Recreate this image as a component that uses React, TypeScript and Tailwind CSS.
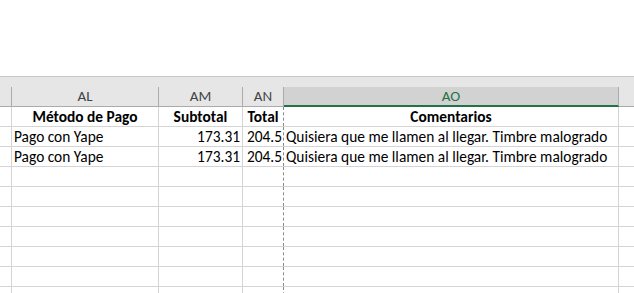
import React from "react";

const font = { fontFamily: "Carlito, Lato, 'Liberation Sans', sans-serif" };

function Row({ a, b, c, d, bold }: { a?: string; b?: string; c?: string; d?: string; bold?: boolean }) {
  const w = bold ? "font-bold" : "";
  return (
    <div className="flex h-[20px] border-b border-[#d4d4d4] text-[15.4px] leading-[19px] text-black">
      <div className="w-[12px] shrink-0 border-r border-[#d4d4d4]" />
      <div className={`w-[147px] shrink-0 border-r border-[#d4d4d4] px-[2px] whitespace-nowrap ${bold ? "text-center" : "text-left"} ${w}`}>{a}</div>
      <div className={`w-[84px] shrink-0 border-r border-[#d4d4d4] px-[2px] whitespace-nowrap ${bold ? "text-center" : "text-right"} ${w}`}>{b}</div>
      <div className={`w-[41px] shrink-0 border-r border-dashed border-r-[#8a8a8a] px-[1px] whitespace-nowrap ${bold ? "text-center" : "text-right"} ${w}`}>{c}</div>
      <div className={`w-[335px] shrink-0 border-r border-[#d4d4d4] px-[2px] whitespace-nowrap overflow-visible ${bold ? "text-center" : "text-left"} ${w}`}>{d}</div>
      <div className="flex-1" />
    </div>
  );
}

export default function App() {
  return (
    <div className="w-[634px] h-[293px] overflow-hidden bg-white" style={font}>
      <div className="h-[76px] bg-white" />
      <div className="border-t border-[#c6c6c6] bg-[#e6e6e6]">
        <div className="h-[10px]" />
        <div className="flex h-[20px] border-b border-[#ababab] text-[15px] leading-[19px] text-[#444]">
          <div className="w-[12px] shrink-0 border-r border-[#ababab]" />
          <div className="w-[147px] shrink-0 border-r border-[#ababab] text-center">AL</div>
          <div className="w-[84px] shrink-0 border-r border-[#ababab] text-center">AM</div>
          <div className="w-[41px] shrink-0 border-r border-[#ababab] text-center">AN</div>
          <div className="w-[335px] shrink-0 border-r border-[#ababab] bg-[#d2d2d2] text-center text-[#217346] border-b-2 border-b-[#217346] -mb-[1px] h-[20px] leading-[18px]">AO</div>
          <div className="flex-1" />
        </div>
      </div>
      <Row a="Método de Pago" b="Subtotal" c="Total" d="Comentarios" bold />
      <Row a="Pago con Yape" b="173.31" c="204.5" d="Quisiera que me llamen al llegar. Timbre malogrado" />
      <Row a="Pago con Yape" b="173.31" c="204.5" d="Quisiera que me llamen al llegar. Timbre malogrado" />
      <Row />
      <Row />
      <Row />
      <Row />
      <Row />
      <Row />
      <Row />
    </div>
  );
}
